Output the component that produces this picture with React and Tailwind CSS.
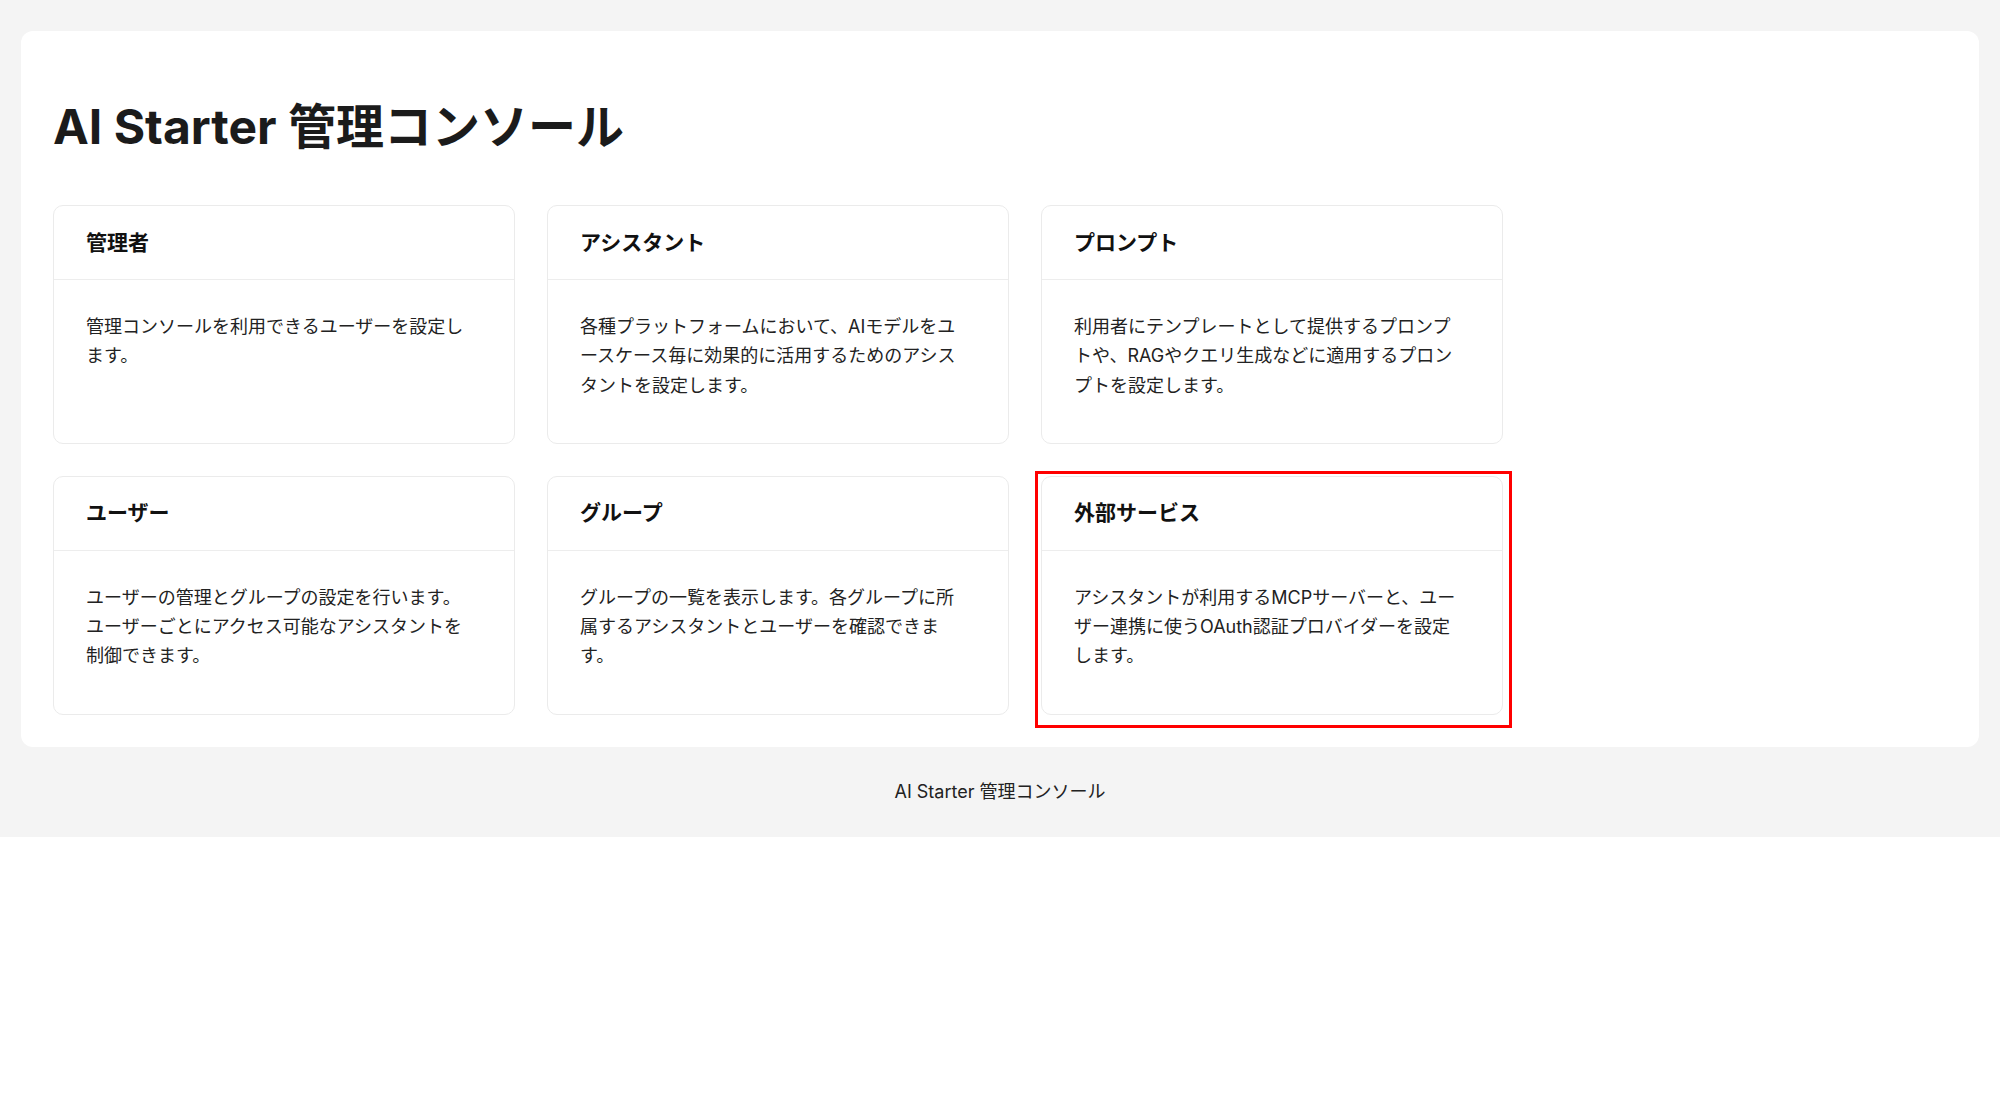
const cards = [
  {
    title: '管理者',
    text: '管理コンソールを利用できるユーザーを設定します。',
  },
  {
    title: 'アシスタント',
    text: '各種プラットフォームにおいて、AIモデルをユースケース毎に効果的に活用するためのアシスタントを設定します。',
  },
  {
    title: 'プロンプト',
    text: '利用者にテンプレートとして提供するプロンプトや、RAGやクエリ生成などに適用するプロンプトを設定します。',
  },
  {
    title: 'ユーザー',
    text: 'ユーザーの管理とグループの設定を行います。ユーザーごとにアクセス可能なアシスタントを制御できます。',
  },
  {
    title: 'グループ',
    text: 'グループの一覧を表示します。各グループに所属するアシスタントとユーザーを確認できます。',
  },
  {
    title: '外部サービス',
    text: 'アシスタントが利用するMCPサーバーと、ユーザー連携に使うOAuth認証プロバイダーを設定します。',
    highlight: true,
  },
];

const MenuCard = ({ title, text, highlight }) => {
  return (
    <div className="relative">
      <div className="h-full bg-white border border-[#ebebeb] rounded-[10px] cursor-pointer">
        <div className="h-[74px] flex items-center px-8 border-b border-[#ededed]">
          <h2 className="text-[21px] leading-7 font-bold text-[#111]">{title}</h2>
        </div>
        <div className="pl-8 pr-10 pt-8 pb-[43px]">
          <p className="text-lg leading-relaxed text-[#222]">{text}</p>
        </div>
      </div>
      {highlight && (
        <div className="absolute -left-[6px] -top-[5px] -right-[9px] -bottom-[13px] border-[3px] border-[#f00] pointer-events-none" />
      )}
    </div>
  );
};

const App = () => {
  return (
    <div
      className="min-h-screen bg-white"
      style={{ fontFamily: 'Inter, "Noto Sans CJK JP", "Noto Sans", sans-serif' }}
    >
      <div className="bg-[#f4f4f4]">
        <div className="px-[21px] pt-[31px]">
          <div className="bg-white rounded-xl px-8 pt-[72px] pb-8">
            <h1 className="text-5xl leading-none font-bold text-[#1b1b1b] mb-[54px]">
              AI Starter 管理コンソール
            </h1>
            <div className="grid grid-cols-[repeat(3,462px)] gap-8">
              {cards.map((item, index) => (
                <MenuCard key={index} {...item} />
              ))}
            </div>
          </div>
        </div>
        <footer className="h-[90px] flex items-center justify-center">
          <span className="text-lg leading-7 text-[#222]">AI Starter 管理コンソール</span>
        </footer>
      </div>
    </div>
  );
};

export default App;
